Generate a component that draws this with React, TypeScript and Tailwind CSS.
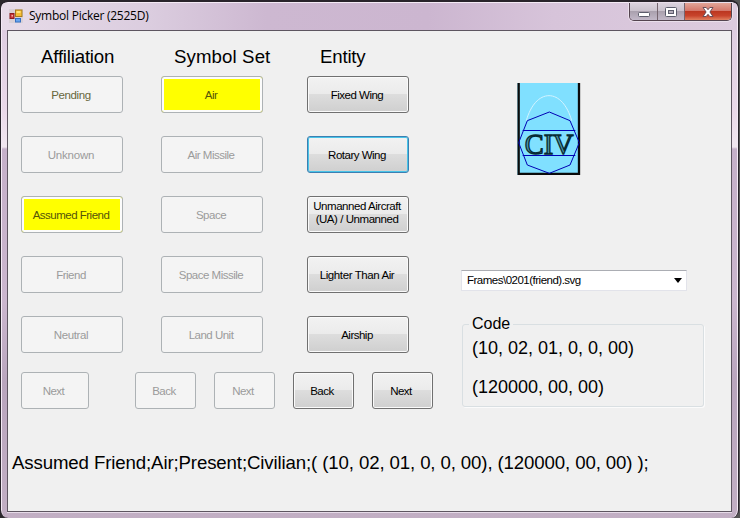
import React from "react";

type Kind = "normal" | "disabled" | "focus" | "selected";

const kinds: Record<Kind, string> = {
  normal:
    "border-[#707070] shadow-[inset_0_0_0_1px_#fafafa] bg-[linear-gradient(#f2f2f2,#ebebeb_48%,#dddddd_50%,#cfcfcf)] text-black",
  focus:
    "border-[#3c7fb1] shadow-[inset_0_0_0_1px_#48c4e8] bg-[linear-gradient(#f2f2f2,#ebebeb_48%,#dddddd_50%,#cfcfcf)] text-black",
  disabled: "border-[#adb2b5] bg-[#f4f4f4] text-[#9b9b9b]",
  selected:
    "border-[#adb2b5] bg-[#ffff00] shadow-[inset_0_0_0_2px_#fcfcfc] text-[#55550a]",
};

function Btn({ children, kind = "normal", size = "w-[102px] pr-[2px]", text = "tracking-[-0.5px]" }: {
  children: React.ReactNode; kind?: Kind; size?: string; text?: string;
}) {
  return (
    <button className={`flex h-[37px] shrink-0 items-center justify-center rounded-[3px] border pt-px text-center text-[11.5px] leading-[13px] ${size} ${kinds[kind]}`}>
      <span className={`whitespace-nowrap ${text}`}>{children}</span>
    </button>
  );
}

function FormIcon() {
  return (
    <svg width="14" height="14" viewBox="0 0 14 14" className="shrink-0">
      <rect width="14" height="14" fill="#d9d0d6" />
      <rect x="6.5" y="1" width="6.5" height="6.5" fill="#f6bd35" stroke="#a77a1d" />
      <rect x="7.5" y="2" width="4" height="2" fill="#ffe47b" />
      <rect x="1" y="4.5" width="4" height="5" fill="#cf3939" stroke="#8c1d20" />
      <rect x="2.5" y="6" width="1.5" height="1.5" fill="#f3b0a8" />
      <rect x="6.5" y="9.5" width="5" height="3.5" fill="#69a5ee" stroke="#356fc2" />
    </svg>
  );
}

function CaptionButtons() {
  return (
    <div className="flex h-[18px] w-[103px] overflow-hidden rounded-b-[5px] border border-t-0 border-[#54444f] shadow-[0_0_0_1px_#eadfeb]">
      <div className="flex w-[28px] items-center justify-center border-r border-[#75656f] bg-[linear-gradient(#dcd3de,#c9c1cc_48%,#aaa1ae_50%,#c2b8c8)]">
        <svg width="14" height="14" viewBox="0 0 14 14"><rect x="1.5" y="7.5" width="11" height="4" rx="1" fill="#fff" stroke="#5c5d6c" /></svg>
      </div>
      <div className="flex w-[27px] items-center justify-center border-r border-[#75656f] bg-[linear-gradient(#dcd3de,#c9c1cc_48%,#aaa1ae_50%,#c2b8c8)]">
        <svg width="14" height="14" viewBox="0 0 14 14">
          <rect x="1.5" y="2.5" width="11" height="9" rx="1" fill="#fff" stroke="#5c5d6c" />
          <rect x="4.5" y="5.5" width="5" height="3" fill="#b3adb9" stroke="#5c5d6c" />
        </svg>
      </div>
      <div className="flex flex-1 items-center justify-center bg-[linear-gradient(#e2a598,#d4776a_46%,#bc3721_50%,#c8442c_75%,#e0805f)]">
        <svg width="14" height="14" viewBox="0 0 14 14">
          <path d="M2 2.5h3.2L7 4.7l1.800-2.200H12L8.900 7l3.100 4.500H8.800L7 9.300l-1.800 2.200H2L5.100 7z" fill="#fff" stroke="#5d4450" strokeWidth=".9" />
        </svg>
      </div>
    </div>
  );
}

function CivilianSymbol() {
  return (
    <svg width="64" height="92" viewBox="51 39 192 276">
      <rect x="52" y="39" width="188" height="276" fill="#80e0ff" />
      <path d="M79 152C92 105 118 77 147 77s55 28 68 75" fill="none" stroke="#d3f4ff" strokeWidth="3" />
      <path d="M56 39V312H237V39" fill="none" stroke="#0b0b0b" strokeWidth="7" />
      <text x="74" y="251" textLength="147" lengthAdjust="spacingAndGlyphs" fontSize="88" fontFamily="Liberation Serif, serif" fill="#4f9aa8" stroke="#062a33" strokeWidth="4">CIV</text>
      <path d="M148 126l62 26 28 66-28 67-62 25-66-25-26-67 26-66zM68 181.500H226M68 256.500H226" fill="none" stroke="#0000b4" strokeWidth="3" />
    </svg>
  );
}

export default function App() {
  return (
    <div className="h-[518px] w-[740px] overflow-hidden bg-[linear-gradient(90deg,#2a272b,#777,#3a373a_38%,#8a8a88_60%,#555)] font-['Liberation_Sans',Arial,sans-serif] text-black">
      <div className="flex h-[518px] w-[739px] flex-col overflow-hidden rounded-[8px] border-x border-t-2 border-[#29242b] bg-[linear-gradient(#dac9de,#ead9e9_110px,#f1e7f0_145px,#c5b0c9_147px,#cbb6ce_300px,#b9a5bd_380px,#c2afc4)] pl-[6px] pr-[5px] shadow-[inset_1px_1px_0_#f4eaf5,inset_-1px_0_0_#f4eaf5]">
        <header className="-ml-[5px] -mr-[4px] mt-px flex h-[27px] shrink-0 items-start justify-between bg-[linear-gradient(90deg,#e7dbe8,#dbcddf_20%,#cdb8d1_36%,#ccb6d0_58%,#d7c4da_75%,#dccbde)] pl-[7px] pr-[5px]">
          <div className="flex h-[26px] items-center gap-[6px]">
            <FormIcon />
            <span className="whitespace-nowrap font-['Open_Sans','Noto_Sans',sans-serif] text-[12px] leading-none tracking-[-0.25px]">Symbol Picker (2525D)</span>
          </div>
          <CaptionButtons />
        </header>
        <main className="h-[482px] w-[725px] shrink-0 border border-[#5d5560] bg-[#f0f0f0] shadow-[0_1px_0_#e6dbe8]">
          <div className="flex h-[408px]">
            <section className="ml-[13px] w-[440px]">
              <div className="flex h-[45px] items-start pt-[15px] text-[18.67px] leading-[21px]">
                <h2 className="ml-[20px] w-[133px] tracking-[-0.2px]">Affiliation</h2>
                <h2 className="w-[146px] tracking-[0.1px]">Symbol Set</h2>
                <h2 className="tracking-[-0.2px]">Entity</h2>
              </div>
              <div className="flex">
                <div className="mr-[38px] flex flex-col gap-[23px]">
                  <Btn kind="disabled" text="text-[#67673c] tracking-[-0.4px]">Pending</Btn>
                  <Btn kind="disabled" text="tracking-[-0.2px]">Unknown</Btn>
                  <Btn kind="selected">Assumed Friend</Btn>
                  <Btn kind="disabled">Friend</Btn>
                  <Btn kind="disabled" text="tracking-[-0.4px]">Neutral</Btn>
                </div>
                <div className="mr-[44px] flex flex-col gap-[23px]">
                  <Btn kind="selected">Air</Btn>
                  <Btn kind="disabled">Air Missile</Btn>
                  <Btn kind="disabled">Space</Btn>
                  <Btn kind="disabled">Space Missile</Btn>
                  <Btn kind="disabled">Land Unit</Btn>
                </div>
                <div className="flex flex-col gap-[23px]">
                  <Btn>Fixed Wing</Btn>
                  <Btn kind="focus">Rotary Wing</Btn>
                  <Btn text="tracking-[-0.45px] -mt-[5px]">Unmanned Aircraft<br />(UA) / Unmanned</Btn>
                  <Btn text="tracking-[-0.4px]">Lighter Than Air</Btn>
                  <Btn>Airship</Btn>
                </div>
              </div>
              <div className="mt-[19px] flex">
                <Btn kind="disabled" size="w-[68px] mr-[46px] pr-[3px]">Next</Btn>
                <Btn kind="disabled" size="w-[61px] mr-[18px] pr-[3px]">Back</Btn>
                <Btn kind="disabled" size="w-[61px] mr-[18px] pr-[3px]">Next</Btn>
                <Btn size="w-[61px] mr-[18px] pr-[3px]">Back</Btn>
                <Btn size="w-[61px] pr-[3px]">Next</Btn>
              </div>
            </section>
            <section className="w-[243px]">
              <div className="ml-[56px] mt-[52px] h-[92px]"><CivilianSymbol /></div>
              <div className="mt-[95px] flex h-[21px] w-[226px] items-center justify-between border border-[#e2e3ea] border-t-[#abadb3] bg-white pl-[5px] pr-[4px] text-[11.5px]">
                <span className="tracking-[-0.5px]">Frames\0201(friend).svg</span>
                <svg width="8" height="5" viewBox="0 0 8 5"><path d="M0 0h8L4 5z" /></svg>
              </div>
              <fieldset className="ml-px mt-[24px] h-[92px] w-[242px] rounded-[3px] border border-[#d9dfe2] shadow-[1px_1px_0_#fbfbfb]">
                <legend className="ml-[6px] px-[3px] text-[16px] leading-[18px]">Code</legend>
                <p className="ml-[9px] mt-[5px] whitespace-nowrap text-[18px] leading-[20px]">(10, 02, 01, 0, 0, 00)</p>
                <p className="ml-[9px] mt-[19px] whitespace-nowrap text-[18px] leading-[20px]">(120000, 00, 00)</p>
              </fieldset>
            </section>
          </div>
          <p className="ml-[4px] mt-[13px] whitespace-nowrap text-[18.67px] leading-[22px] tracking-[-0.13px]">Assumed Friend;Air;Present;Civilian;( (10, 02, 01, 0, 0, 00), (120000, 00, 00) );</p>
        </main>
      </div>
    </div>
  );
}
